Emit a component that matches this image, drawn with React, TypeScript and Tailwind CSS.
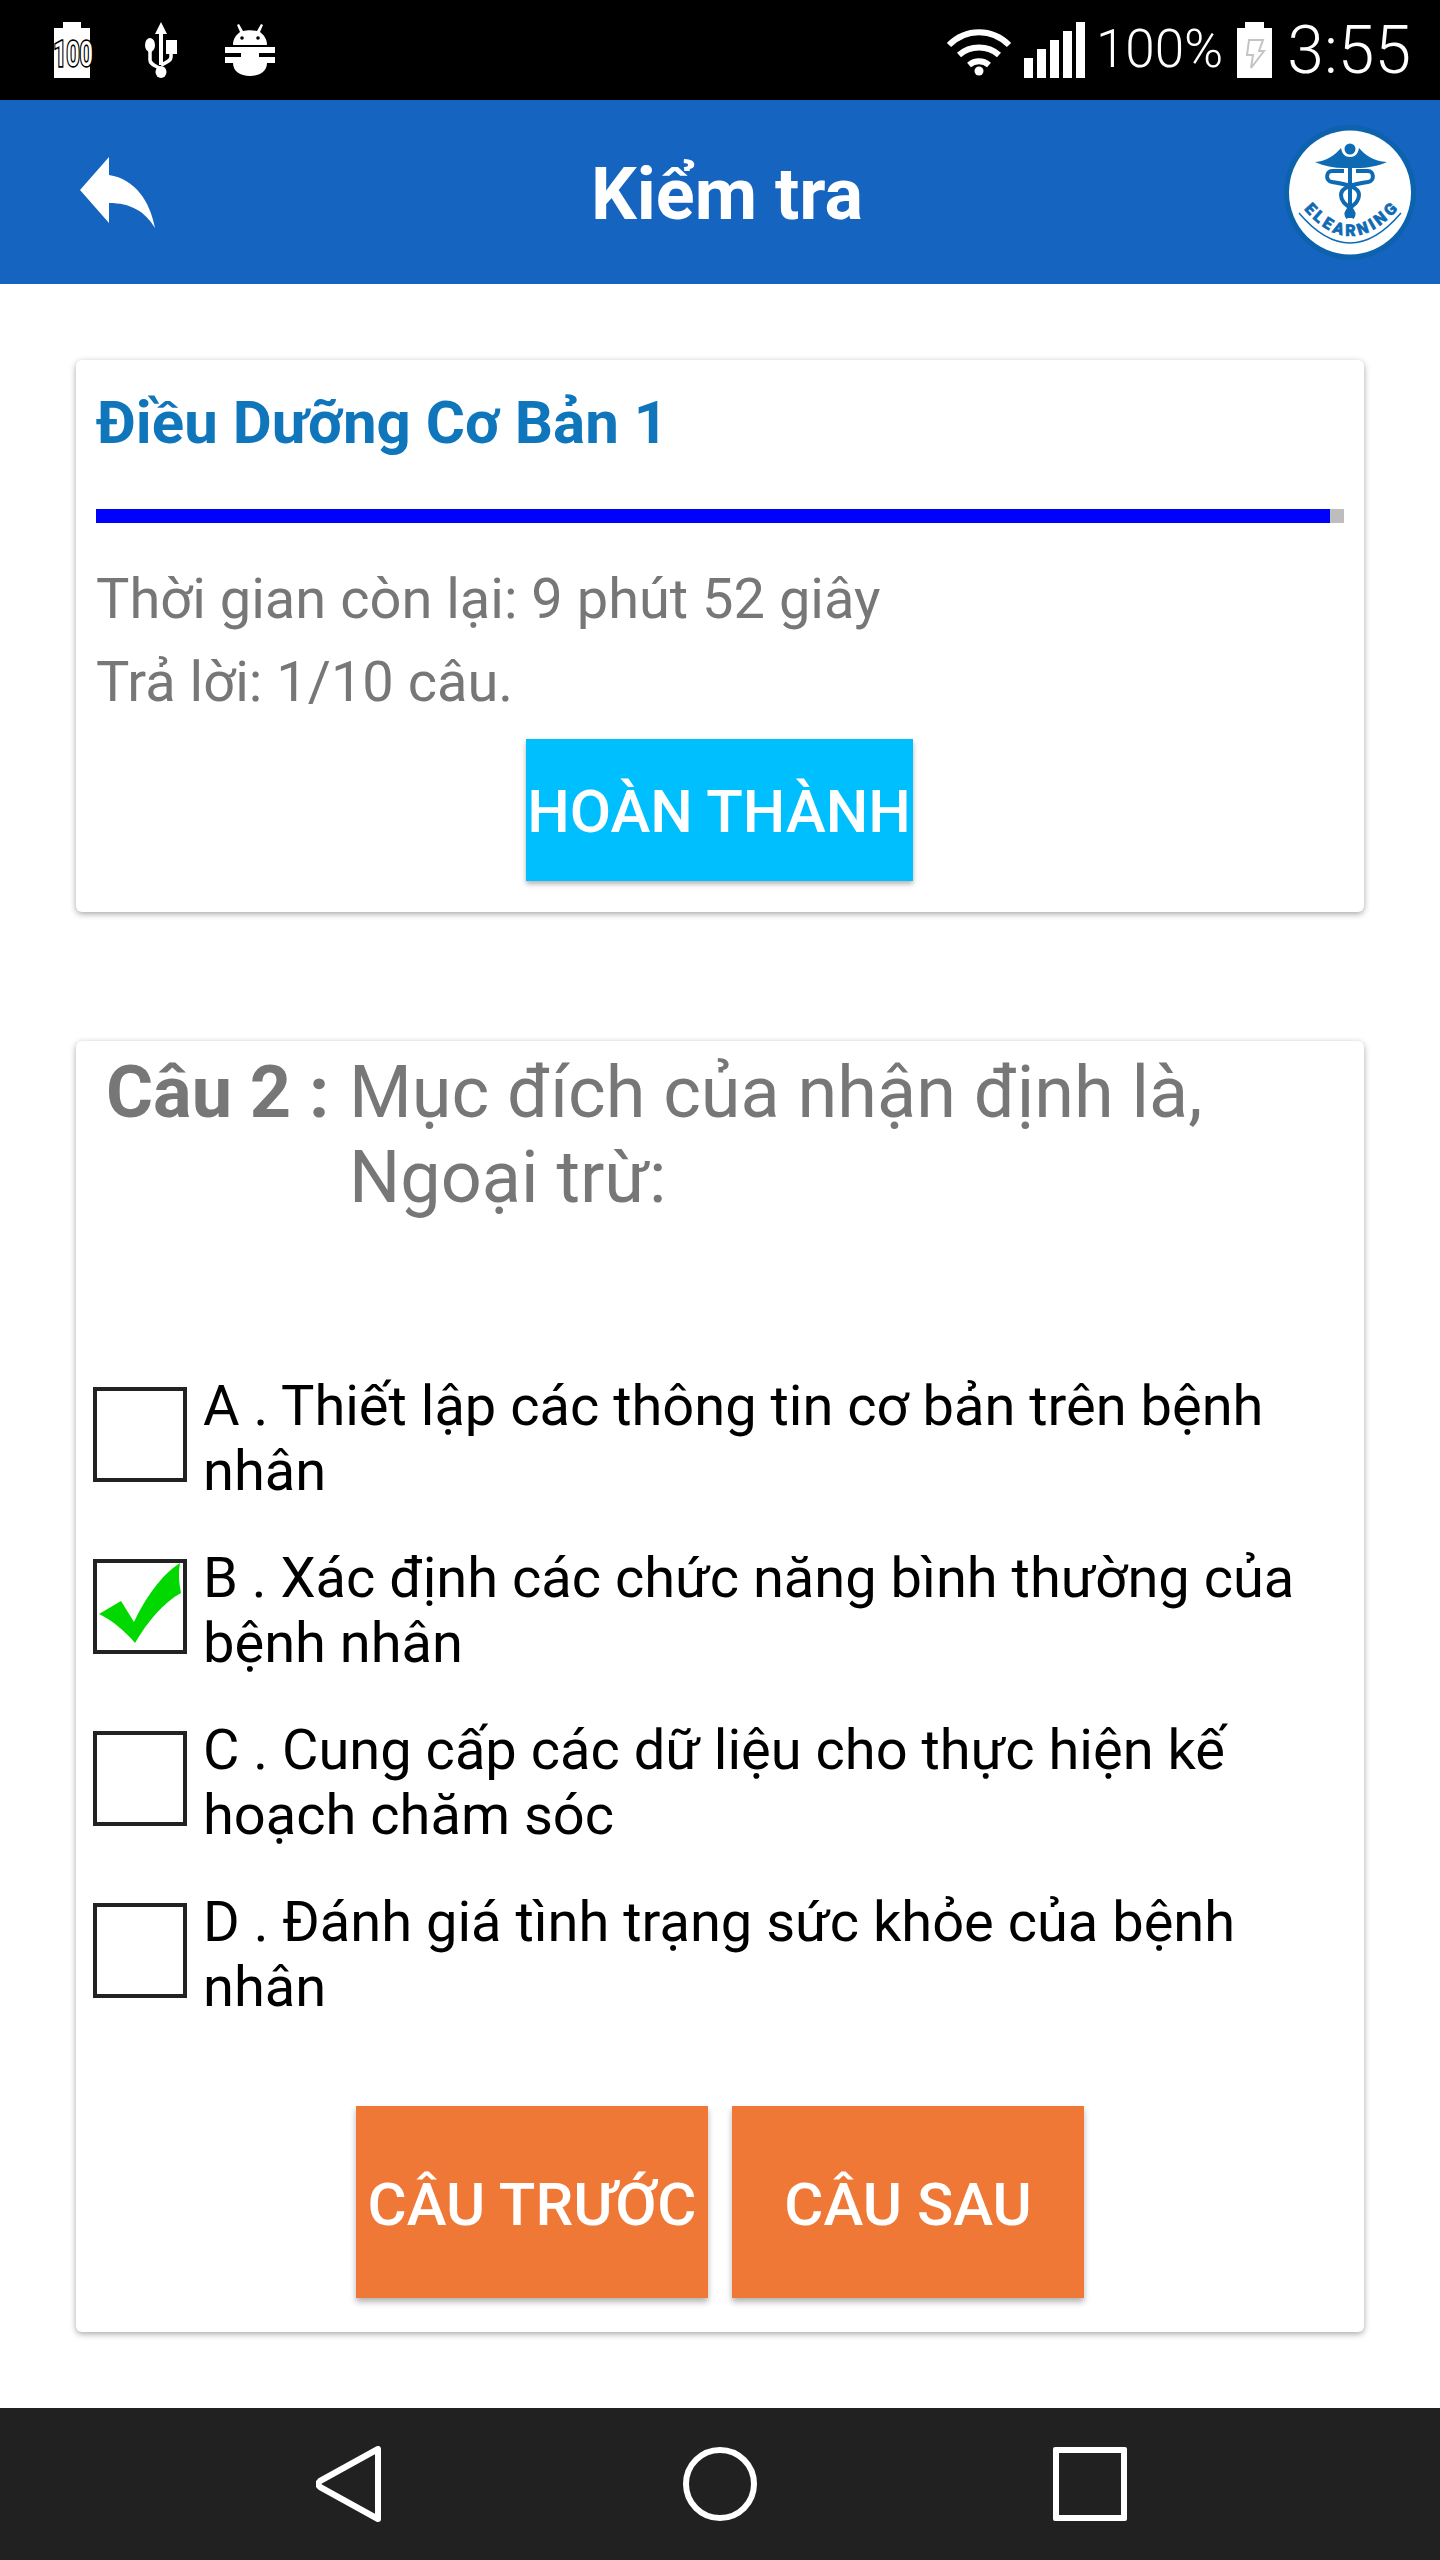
const Battery100 = () => (
  <svg width="46" height="58" viewBox="0 0 46 58" className="shrink-0 overflow-visible">
    <path d="M13 1h18v6h9v50H4V7h9z" fill="#fff" />
    <text x="35" y="45" textAnchor="middle" transform="scale(0.66 1)" fontFamily="Roboto, sans-serif" fontSize="35" fontWeight="500" fill="#fff" stroke="#000" strokeWidth="3.5" paintOrder="stroke">100</text>
  </svg>
)

const UsbIcon = () => (
  <svg width="32" height="56" viewBox="0 0 32 56" className="shrink-0">
    <path d="M16 0l6 12h-4v31h-4V12h-4z" fill="#fff" />
    <ellipse cx="5" cy="23" rx="5" ry="7" fill="#fff" />
    <rect x="21" y="18" width="11" height="14" fill="#fff" />
    <ellipse cx="16" cy="50" rx="5.5" ry="6" fill="#fff" />
    <path d="M5 28v10c0 4 4 5 11 9M26 30v5c0 4-4 5-10 8" fill="none" stroke="#fff" strokeWidth="3.5" />
  </svg>
)

const AndroidIcon = () => (
  <svg width="50" height="54" viewBox="0 0 50 54" className="shrink-0">
    <path d="M8 22c0-6 3-10 7-13l-3-7 2-1 4 7c4-1 10-1 14 0l4-7 2 1-3 7c4 3 7 7 7 13z" fill="#fff" />
    <circle cx="17" cy="15" r="1.8" fill="#000" />
    <circle cx="33" cy="15" r="1.8" fill="#000" />
    <path d="M0 24h50v6H34v4h16v6h-8c0 8-7 13-17 13S8 48 8 40H0v-6h16v-4H0z" fill="#fff" />
  </svg>
)

const WifiIcon = () => (
  <svg width="66" height="52" viewBox="0 0 66 52" className="shrink-0" fill="none" stroke="#fff" strokeWidth="6">
    <path d="M3 21c17-17 43-17 60 0" />
    <path d="M13 31c11-10 29-10 40 0" />
    <path d="M23 41c6-5 14-5 20 0" />
    <circle cx="33" cy="47" r="4.5" fill="#fff" stroke="none" />
  </svg>
)

const SignalIcon = () => (
  <div className="flex h-[56px] shrink-0 items-end gap-[4px]">
    <div className="h-[20px] w-[9px] bg-white" />
    <div className="h-[29px] w-[9px] bg-white" />
    <div className="h-[38px] w-[9px] bg-white" />
    <div className="h-[47px] w-[9px] bg-white" />
    <div className="h-[56px] w-[9px] bg-white" />
  </div>
)

const BatteryCharging = () => (
  <svg width="35" height="56" viewBox="0 0 35 56" className="shrink-0">
    <path d="M8 0h19v6h8v50H0V6h8z" fill="#fff" />
    <path d="M12 18h14l-4 11h5L14 46l2-13h-6z" fill="none" stroke="#c4c4c4" strokeWidth="2" />
  </svg>
)

const BackArrow = () => (
  <svg width="75" height="71" viewBox="0 0 75 71" className="shrink-0">
    <path d="M0 33L29 0v18c26 4 41 26 46 53-10-17-25-25-46-25v20z" fill="#fff" />
  </svg>
)

const Logo = () => (
  <svg width="132" height="135" viewBox="0 0 132 135" className="shrink-0">
    <ellipse cx="66" cy="67.5" rx="66" ry="67.5" fill="#0D62AE" />
    <ellipse cx="66" cy="67.5" rx="61" ry="62" fill="#fff" />
    <g fill="#0F6AB4">
      <circle cx="66" cy="24" r="5.5" />
      <path d="M31 37c12-1 20-7 26-14 1 6 4 9 9 9s8-3 9-9c6 7 14 13 28 14-9 4-20 6-30 6H60c-10 0-20-2-29-6z" />
      <rect x="64" y="36" width="4" height="57" />
    </g>
    <g fill="none" stroke="#0F6AB4" strokeWidth="4">
      <path d="M60 46H48c-6 0-7 10 0 11 12 2 27 4 27 13 0 6-4 9-9 13-5 4-4 7-2 10" />
      <path d="M72 46h12c6 0 7 10 0 11-12 2-27 4-27 13 0 6 4 9 9 13 5 4 4 7 2 10" />
    </g>
    <path id="logoArc" d="M18 82Q66 140 116 82" fill="none" />
    <path d="M15 88Q66 148 117 88" fill="none" stroke="#0F6AB4" strokeWidth="1.5" />
    <text fontFamily="Roboto, sans-serif" fontSize="16" fontWeight="900" fill="#0F6AB4" stroke="#0F6AB4" strokeWidth="0.6" textLength="112">
      <textPath href="#logoArc" startOffset="50%" textAnchor="middle" textLength="112">ELEARNING</textPath>
    </text>
  </svg>
)

const options = [
  { id: "A", lines: "A . Thiết lập các thông tin cơ bản trên bệnh nhân", checked: false },
  { id: "B", lines: "B . Xác định các chức năng bình thường của bệnh nhân", checked: true },
  { id: "C", lines: "C . Cung cấp các dữ liệu cho thực hiện kế hoạch chăm sóc", checked: false },
  { id: "D", lines: "D . Đánh giá tình trạng sức khỏe của bệnh nhân", checked: false },
]

const OptionRow = ({ lines, checked }: { lines: string; checked: boolean }) => (
  <div className="flex h-[172px] items-start">
    <div className="relative mt-[6px] h-[95px] w-[94px] shrink-0 border-[4px] border-[#222]">
      {checked && (
        <svg width="94" height="95" viewBox="0 0 94 95" className="absolute left-[-4px] top-[-4px]">
          <path d="M6 55L28 42 41 63C52 40 68 16 87 4c-2 10-1 20 1 30C70 44 55 62 42 84 32 72 20 62 6 55z" fill="#00D800" />
        </svg>
      )}
    </div>
    <p className="ml-[16px] mt-[-7px] w-[1130px] text-[56px] leading-[65px] text-black">{lines}</p>
  </div>
)

const App = () => {
  return (
    <div className="flex h-[2560px] w-[1440px] flex-col bg-white font-['Roboto',sans-serif]">
      {/* status bar */}
      <div className="flex h-[100px] shrink-0 items-center bg-black text-white">
        <div className="ml-[50px] flex items-center">
          <Battery100 />
          <div className="ml-[49px]"><UsbIcon /></div>
          <div className="ml-[48px]"><AndroidIcon /></div>
        </div>
        <div className="ml-auto mr-[29px] flex items-center">
          <WifiIcon />
          <div className="ml-[12px]"><SignalIcon /></div>
          <span className="ml-[11px] text-[53px] font-light">100%</span>
          <div className="ml-[14px]"><BatteryCharging /></div>
          <span className="ml-[15px] text-[66px] font-light">3:55</span>
        </div>
      </div>

      {/* app bar */}
      <div className="flex h-[184px] shrink-0 items-center bg-[#1565C0]">
        <div className="ml-[80px]"><BackArrow /></div>
        <h1 className="ml-[436px] mt-[6px] text-[72px] font-bold text-white">Kiểm tra</h1>
        <div className="ml-auto mr-[24px]"><Logo /></div>
      </div>

      {/* content */}
      <div className="flex flex-1 flex-col px-[76px] pt-[76px]">
        <div className="flex h-[552px] flex-col rounded-[6px] bg-white px-[20px] shadow-[0_2px_6px_rgba(0,0,0,0.35)]">
          <h2 className="mt-[30px] text-[60px] font-bold leading-[66px] text-[#1076BC]">Điều Dưỡng Cơ Bản 1</h2>
          <div className="mt-[53px] h-[14px] w-full bg-[#BDBDBD]">
            <div className="h-full w-[1234px] bg-[#0000FF]" />
          </div>
          <p className="mt-[34px] text-[56px] leading-[84px] text-[#777]">Thời gian còn lại: 9 phút 52 giây</p>
          <p className="text-[56px] leading-[82px] text-[#777]">Trả lời: 1/10 câu.</p>
          <button className="mx-auto mt-[16px] h-[142px] w-[387px] translate-x-[-1px] whitespace-nowrap bg-[#00BFFF] pt-[3px] text-center text-[60px] font-medium text-white shadow-[0_3px_5px_rgba(0,0,0,0.3)]">
            HOÀN THÀNH
          </button>
        </div>

        <div className="mt-[129px] flex h-[1291px] flex-col rounded-[6px] bg-white px-[17px] shadow-[0_2px_6px_rgba(0,0,0,0.35)]">
          <div className="flex items-start pl-[13px] pt-[9px] text-[72px] leading-[85px] text-[#777]">
            <span className="w-[243px] shrink-0 font-bold">Câu 2 :</span>
            <span className="w-[960px]">Mục đích của nhận định là, Ngoại trừ:</span>
          </div>
          <div className="mt-[161px] flex flex-col">
            {options.map((o) => (
              <OptionRow key={o.id} lines={o.lines} checked={o.checked} />
            ))}
          </div>
          <div className="mt-[37px] flex justify-center gap-[24px]">
            <button className="h-[192px] w-[352px] whitespace-nowrap bg-[#F07836] pt-[5px] text-center text-[60px] font-medium text-white shadow-[0_4px_6px_rgba(0,0,0,0.3)]">CÂU TRƯỚC</button>
            <button className="h-[192px] w-[352px] whitespace-nowrap bg-[#F07836] pt-[5px] text-center text-[60px] font-medium text-white shadow-[0_4px_6px_rgba(0,0,0,0.3)]">CÂU SAU</button>
          </div>
        </div>
      </div>

      {/* nav bar */}
      <div className="flex h-[152px] shrink-0 items-center bg-[#212121]">
        <svg width="66" height="76" viewBox="0 0 66 76" className="ml-[316px] shrink-0">
          <path d="M62 3v70L4 41c-2-2-2-4 0-6z" fill="none" stroke="#fff" strokeWidth="6" strokeLinejoin="round" />
        </svg>
        <div className="ml-[301px] h-[74px] w-[74px] rounded-full border-[6px] border-white" />
        <div className="ml-[296px] h-[74px] w-[74px] rounded-[2px] border-[6px] border-white" />
      </div>
    </div>
  )
}

export default App
